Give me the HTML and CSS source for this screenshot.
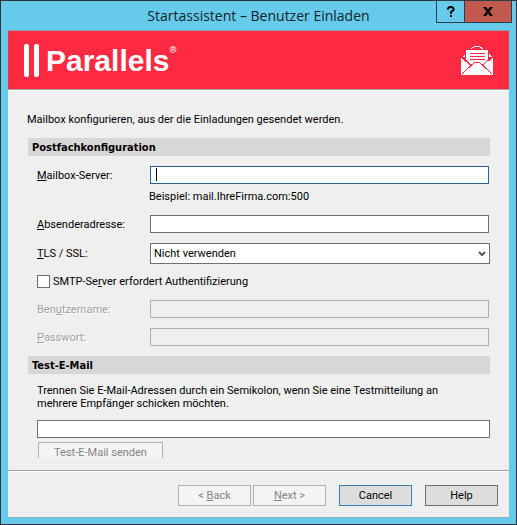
FILE: index.html
```html
<!DOCTYPE html>
<html lang="de">
<head>
    <meta charset="UTF-8">
    <meta name="viewport" content="width=device-width, initial-scale=1.0">
    <title>Startassistent – Benutzer Einladen</title>

    <link rel="stylesheet" href="styles.css">
</head>

<body>

    <div class="window">
        <div class="titlebar">
            <h1>Startassistent – Benutzer Einladen</h1>
            <div class="caption-buttons">
                <button type="button" class="caption-help" aria-label="Hilfe">
                    <svg width="8" height="11" viewBox="0 0 8 11"><path d="M1 3.5V2.5L2.5 1H5L6.5 2.5V4L4 6V8M3 10H5" fill="none" stroke="#000" stroke-width="2"/></svg>
                </button>
                <button type="button" class="caption-close" aria-label="Schließen">
                    <svg width="10" height="9" viewBox="0 0 10 9"><path d="M0 0H3L5 2.5L7 0H10L6.5 4.5L10 9H7L5 6.5L3 9H0L3.5 4.5Z" fill="#000"/></svg>
                </button>
            </div>
        </div>

        <form class="dialog">
            <div class="banner">
                <div class="logo">
                    <svg width="16" height="34" viewBox="0 0 16 34"><rect x="0" y="0" width="5" height="33" rx="2" fill="#fff"/><rect x="10" y="0" width="5" height="33" rx="2" fill="#fff"/></svg>
                    <span class="logo-name">Parallels</span>
                    <span class="logo-mark">®</span>
                </div>
                <svg class="mail-icon" width="32" height="29" viewBox="0 0 32 29" shape-rendering="crispEdges">
                    <path d="M10 3L12 1.5L14 0.5H18L20 1.5L22 3" fill="none" stroke="#fff"/>
                    <path d="M5 4H27V15L21 21H11L5 15Z" fill="#fff"/>
                    <path d="M9 7.5H24M9 10.5H24M9 13.5H24" stroke="#ff2a42"/>
                    <path d="M1 11L4 8V11ZM31 11L28 8V11Z" fill="#fff"/>
                    <path d="M0 12L9 19Q16 13 23 19L32 12V29H0Z" fill="#fff"/>
                    <path d="M4 13L10 19M28 13L22 19M1 28L11 18.5Q16 14 21 18.5L31 28" fill="none" stroke="#ff2a42"/>
                </svg>
            </div>

            <div class="content">
                <p class="intro">Mailbox konfigurieren, aus der die Einladungen gesendet werden.</p>

                <h2>Postfachkonfiguration</h2>
                <div class="form-grid">
                    <label for="server"><u>M</u>ailbox-Server:</label>
                    <div class="field focused">
                        <input type="text" id="server">
                        <span class="caret"></span>
                    </div>
                    <p class="hint">Beispiel: mail.IhreFirma.com:500</p>

                    <label for="sender"><u>A</u>bsenderadresse:</label>
                    <div class="field">
                        <input type="text" id="sender">
                    </div>

                    <label for="tls"><u>T</u>LS / SSL:</label>
                    <div class="select-wrap">
                        <select id="tls">
                            <option>Nicht verwenden</option>
                        </select>
                        <svg class="chevron" width="8" height="6" viewBox="0 0 8 6"><path d="M1 1L4 4L7 1" fill="none" stroke="#555" stroke-width="2"/></svg>
                    </div>

                    <div class="check-row">
                        <input type="checkbox" id="auth">
                        <label for="auth">SMTP-Se<u>r</u>ver erfordert Authentifizierung</label>
                    </div>

                    <label for="user" class="disabled">Ben<u>u</u>tzername:</label>
                    <div class="field">
                        <input type="text" id="user" disabled>
                    </div>

                    <label for="password" class="disabled"><u>P</u>asswort:</label>
                    <div class="field">
                        <input type="password" id="password" disabled>
                    </div>
                </div>

                <h2>Test-E-Mail</h2>
                <div class="test-mail">
                    <label for="recipients">Trennen Sie E-Mail-Adressen durch ein Semikolon, wenn Sie eine Testmitteilung an<br>mehrere Empfänger schicken möchten.</label>
                    <input type="text" id="recipients">
                    <div class="test-clip">
                        <button type="button" class="btn btn-test" disabled>Test-E-Mail senden</button>
                    </div>
                </div>
            </div>

            <div class="footer">
                <div class="step-buttons">
                    <button type="button" class="btn" disabled>&lt; <u>B</u>ack</button>
                    <button type="button" class="btn" disabled><u>N</u>ext &gt;</button>
                </div>
                <button type="button" class="btn btn-default">Cancel</button>
                <button type="button" class="btn">Help</button>
            </div>
        </form>
    </div>

</body>

</html>
```

FILE: styles.css
```css
* {
    box-sizing: border-box;
}

body {
    margin: 0;
    font-family: Roboto, sans-serif;
    font-size: 11px;
    line-height: 13px;
    color: #000;
}

h1,
h2,
p {
    margin: 0;
}

svg {
    display: block;
}

button,
input,
select {
    font: inherit;
    color: inherit;
    border-radius: 0;
    margin: 0;
}

.window {
    display: flex;
    flex-direction: column;
    min-height: 100vh;
    padding: 0 7px 6px;
    border: 1px solid #30343a;
    background-color: #66caea;
}

/* Title bar */
.titlebar {
    position: relative;
    height: 29px;
}

.titlebar h1 {
    font-family: "Open Sans", sans-serif;
    font-size: 14px;
    font-weight: normal;
    line-height: 29px;
    text-align: center;
    color: #10242c;
}

.caption-buttons {
    position: absolute;
    top: -1px;
    right: -3px;
    display: flex;
    height: 23px;
    border: 1px solid #2c3e48;
}

.caption-buttons button {
    display: flex;
    align-items: center;
    justify-content: center;
    padding: 0;
    border: none;
}

.caption-help {
    width: 27px;
    background-color: #66caea;
}

.caption-buttons .caption-close {
    width: 47px;
    border-left: 1px solid #2c3e48;
    background-color: #c1594f;
}

/* Dialog */
.dialog {
    display: flex;
    flex-direction: column;
    flex-grow: 1;
    border-top: 1px solid #8c9ea6;
    border-bottom: 1px solid #8fb0bc;
    background-color: #efefef;
}

.banner {
    display: flex;
    justify-content: space-between;
    align-items: center;
    height: 60px;
    padding: 0 16px;
    background-color: #ff2a42;
    border-bottom: 1px solid #fff;
    box-shadow: inset 0 -1px #a0a0a0;
}

.logo {
    display: flex;
    align-items: center;
    color: #fff;
}

.logo-name {
    margin-left: 6px;
    font-family: "Liberation Sans", Arial, sans-serif;
    font-size: 30px;
    font-weight: bold;
    line-height: 34px;
}

.logo-mark {
    align-self: flex-start;
    font-size: 9px;
}

.content {
    flex-grow: 1;
    padding: 22px 19px 11px 20px;
}

.intro {
    margin: 0 0 12px -1px;
}

h2 {
    padding: 1px 4px 0;
    background-color: #d7d7d7;
    font-family: "DejaVu Sans Condensed", "DejaVu Sans", sans-serif;
    font-size: 11px;
    line-height: 17px;
}

.form-grid {
    display: grid;
    grid-template-columns: 113px 1fr;
    row-gap: 10px;
    align-items: center;
    padding: 10px 0 10px 9px;
}

.field {
    position: relative;
    margin-right: 1px;
}

input[type="text"],
input[type="password"] {
    display: block;
    width: 100%;
    height: 18px;
    padding: 0 4px;
    border: 1px solid #707070;
    background-color: #fff;
    outline: none;
}

.focused input[type="text"] {
    border-color: #2c628b;
}

input[type="text"]:disabled,
input[type="password"]:disabled {
    border-color: #abafb2;
    background-color: #efefef;
}

.caret {
    position: absolute;
    top: 2px;
    left: 6px;
    width: 1px;
    height: 13px;
    background-color: #000;
}

.hint {
    grid-column: 2;
    margin: -4px 0 2px -1px;
}

.select-wrap {
    position: relative;
}

select {
    display: block;
    width: 100%;
    height: 21px;
    padding: 0 20px 0 3px;
    border: 1px solid #707070;
    background-color: #fff;
    appearance: none;
}

.chevron {
    position: absolute;
    top: 8px;
    right: 4px;
}

.check-row {
    grid-column: 1 / 3;
    display: flex;
    align-items: center;
    gap: 3px;
    margin: 1px 0 2px;
}

input[type="checkbox"] {
    width: 13px;
    height: 13px;
    border: 1px solid #707070;
    background-color: #fff;
    appearance: none;
}

input[type="checkbox"]:checked {
    background-color: #707070;
}

.disabled {
    color: #a0a0a0;
    text-shadow: 1px 1px #fff;
}

.test-mail {
    padding: 10px 0 0 9px;
}

.test-mail input {
    margin-top: 10px;
}

/* Buttons */
.btn {
    width: 73px;
    height: 21px;
    padding: 0;
    border: 1px solid #707070;
    background-color: #dddddd;
}

.btn:disabled {
    border-color: #adb2b5;
    background-color: #f4f4f4;
    color: #838383;
}

.btn.btn-default {
    border-color: #3c7fb1;
}

.btn-test {
    width: 125px;
}

.test-clip {
    height: 16px;
    margin: 4px 0 0 1px;
    overflow: hidden;
}

.footer {
    display: flex;
    justify-content: flex-end;
    gap: 13px;
    padding: 14px 11px 11px;
    border-top: 1px solid #a0a0a0;
    box-shadow: inset 0 1px #fff;
}

.step-buttons {
    display: flex;
    gap: 2px;
}
```
